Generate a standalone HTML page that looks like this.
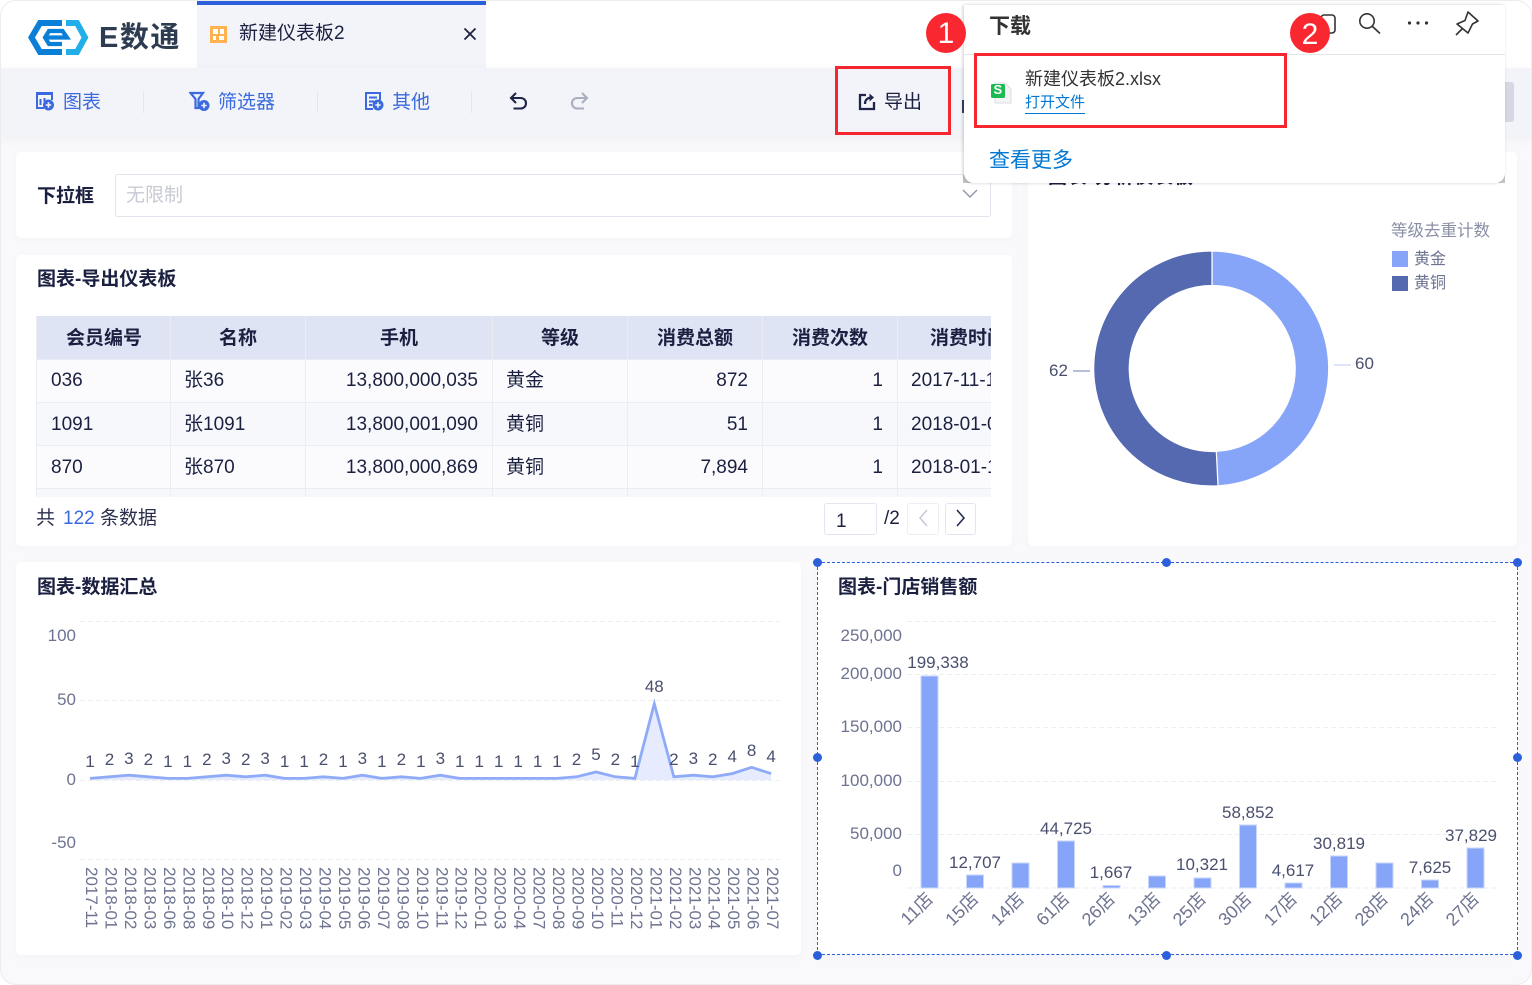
<!DOCTYPE html>
<html lang="zh">
<head>
<meta charset="utf-8">
<title>新建仪表板2</title>
<style>
html,body{margin:0;padding:0;width:1532px;height:985px;background:#fff;overflow:hidden}
body,svg text{font-family:"Liberation Sans","Noto Sans CJK SC",sans-serif}
#app{position:absolute;left:0;top:0;width:1530px;height:983px;border:1px solid #ececef;border-radius:16px;background:#f9f9fb;overflow:hidden}
.abs{position:absolute;box-sizing:border-box}
.t{position:absolute;white-space:nowrap;line-height:26px;height:26px;font-size:19px;color:#1b2040}
.b{font-weight:700}
.card{position:absolute;background:#fff;border-radius:5px;box-shadow:0 2px 10px rgba(40,50,90,.025)}
.blue{color:#3b6ae0}
.h{position:absolute;width:9px;height:9px;border-radius:50%;background:#2b5fdb}
</style>
</head>
<body>
<div id="app">
<div style="position:absolute;left:-1px;top:-1px;width:1532px;height:985px">

<!-- top bar -->
<div class="abs" style="left:0;top:0;width:1532px;height:68px;background:#fff"></div>
<svg class="abs" style="left:24px;top:16px" width="70" height="44" viewBox="24 16 70 44">
  <path d="M62 23H40L31.5 37.5L40 52H62" fill="none" stroke="#0a7fd8" stroke-width="6"/>
  <path d="M45 37.5H67L62.5 31H49L45 37.5L49 44H62" fill="none" stroke="#0a7fd8" stroke-width="4.2"/>
  <path d="M66 23H77L85 37.5L77 52H66" fill="none" stroke="#22aee8" stroke-width="6"/>
</svg>
<div class="t b" style="left:99px;top:19px;height:36px;line-height:38px;font-size:29px;color:#2d3c50;letter-spacing:1.5px">E数通</div>

<div class="abs" style="left:197px;top:1px;width:289px;height:67px;background:#f2f4f9;border-top:4px solid #2b5fdb"></div>
<svg class="abs" style="left:210px;top:26px" width="17" height="17"><rect width="17" height="17" fill="#ffb24f"/><path d="M3 3H8V8H3ZM10 3H14V8H10ZM3 10H6V14H3ZM9 10H14V14H9Z" fill="#fff"/></svg>
<div class="t" style="left:239px;top:21px">新建仪表板2</div>
<svg class="abs" style="left:462px;top:26px" width="16" height="16"><path d="M2.5 2.5L13.5 13.5M13.5 2.5L2.5 13.5" stroke="#1b2040" stroke-width="1.8"/></svg>

<!-- toolbar -->
<div class="abs" style="left:0;top:68px;width:1532px;height:68px;background:#f2f4f9;box-shadow:0 3px 10px rgba(40,50,90,.05)"></div>
<svg class="abs" style="left:35px;top:91px" width="20" height="20" fill="none" stroke="#3b6ae0" stroke-width="2">
  <path d="M9 17H2V3H17V9" stroke-width="2"/><path d="M1 2.5H18" stroke-width="3"/>
  <path d="M5.5 8V14M9.5 7V11"/><circle cx="13.5" cy="14" r="5.5" fill="#3b6ae0" stroke="none"/><path d="M10.8 14H16.2M13.5 11.3V16.7" stroke="#f2f4f9" stroke-width="1.6"/>
</svg>
<div class="t blue" style="left:63px;top:90px">图表</div>
<div class="abs" style="left:143px;top:91px;width:1px;height:22px;background:#e4e6ee"></div>
<svg class="abs" style="left:189px;top:91px" width="21" height="21" fill="none" stroke="#3b6ae0" stroke-width="2.2">
  <path d="M1.5 2H14L9.5 8V17H6.5V8Z"/><circle cx="15" cy="14.5" r="5.5" fill="#3b6ae0" stroke="none"/><path d="M12.3 14.5H17.7M15 11.8V17.2" stroke="#f2f4f9" stroke-width="1.6"/>
</svg>
<div class="t blue" style="left:218px;top:90px">筛选器</div>
<div class="abs" style="left:317px;top:91px;width:1px;height:22px;background:#e4e6ee"></div>
<svg class="abs" style="left:364px;top:91px" width="20" height="20" fill="none" stroke="#3b6ae0" stroke-width="2">
  <path d="M9 18H2V2H16V9"/><path d="M5 6.5H13M5 10.5H10M5 14H8"/><circle cx="14" cy="14" r="5.5" fill="#3b6ae0" stroke="none"/><path d="M11.3 14H16.7M14 11.3V16.7" stroke="#f2f4f9" stroke-width="1.6"/>
</svg>
<div class="t blue" style="left:392px;top:90px">其他</div>
<div class="abs" style="left:471px;top:91px;width:1px;height:22px;background:#e4e6ee"></div>
<svg class="abs" style="left:509px;top:91px" width="19" height="20" fill="none" stroke="#1f2548" stroke-width="2.1">
  <path d="M7 2L2 7L7 12"/><path d="M2 7H11.5C14.8 7 17 9.3 17 12.2C17 15.2 14.8 17.5 11.5 17.5H4.5"/>
</svg>
<svg class="abs" style="left:570px;top:91px" width="19" height="20" fill="none" stroke="#a9aebf" stroke-width="2.1">
  <path d="M12 2L17 7L12 12"/><path d="M17 7H7.5C4.2 7 2 9.3 2 12.2C2 15.2 4.2 17.5 7.5 17.5H14"/>
</svg>
<svg class="abs" style="left:858px;top:92px" width="19" height="19" fill="none" stroke="#1f2548" stroke-width="2.3">
  <path d="M8 3H2V17H16V10"/><path d="M7 12C7 8 9.5 5.5 14 5.5"/><path d="M11.5 1.5L16 5.5L11.5 9.5" fill="#1f2548" stroke="none"/>
</svg>
<div class="t" style="left:884px;top:90px">导出</div>
<div class="abs" style="left:962px;top:100px;width:2px;height:13px;background:#3a3f58"></div>
<div class="abs" style="left:1505px;top:82px;width:9px;height:40px;background:#d5d8e2;border-radius:0 3px 3px 0"></div>

<!-- dropdown card -->
<div class="card" style="left:16px;top:152px;width:996px;height:86px"></div>
<div class="t b" style="left:37px;top:184px">下拉框</div>
<div class="abs" style="left:115px;top:174px;width:876px;height:43px;background:#fff;border:1px solid #e2e3ec;border-radius:3px"></div>
<div class="t" style="left:126px;top:183px;color:#c8cad3">无限制</div>
<svg class="abs" style="left:961px;top:188px" width="18" height="12" fill="none" stroke="#8f94a8" stroke-width="1.4"><path d="M2 2L9 9L16 2"/></svg>

<!-- table card -->
<div class="card" style="left:16px;top:255px;width:996px;height:291px"></div>
<div class="t b" style="left:37px;top:267px">图表-导出仪表板</div>
<div class="abs" style="left:36px;top:316px;width:955px;height:181px;overflow:hidden;background:#fbfbfe">
  <div class="abs" style="left:0;top:0;width:955px;height:43px;background:#dfe4f5"></div>
  <div class="abs" style="left:0;top:86px;width:955px;height:43px;background:#f7f8fc"></div>
  <div class="abs" style="left:0;top:173px;width:955px;height:8px;background:#f7f8fc"></div>
  <div class="abs" style="left:0;top:43px;width:955px;height:1px;background:#e9ebf4"></div>
  <div class="abs" style="left:0;top:86px;width:955px;height:1px;background:#ecedf4"></div>
  <div class="abs" style="left:0;top:129px;width:955px;height:1px;background:#ecedf4"></div>
  <div class="abs" style="left:0;top:172px;width:955px;height:1px;background:#ecedf4"></div>
  <div class="abs" style="left:0;top:0;width:1px;height:181px;background:#ecedf4"></div>
  <div class="abs" style="left:134px;top:0;width:1px;height:181px;background:#ecedf4"></div>
  <div class="abs" style="left:269px;top:0;width:1px;height:181px;background:#ecedf4"></div>
  <div class="abs" style="left:456px;top:0;width:1px;height:181px;background:#ecedf4"></div>
  <div class="abs" style="left:591px;top:0;width:1px;height:181px;background:#ecedf4"></div>
  <div class="abs" style="left:726px;top:0;width:1px;height:181px;background:#ecedf4"></div>
  <div class="abs" style="left:861px;top:0;width:1px;height:181px;background:#ecedf4"></div>

  <div class="t b" style="left:30px;top:10px">会员编号</div>
  <div class="t b" style="left:183px;top:10px">名称</div>
  <div class="t b" style="left:344px;top:10px">手机</div>
  <div class="t b" style="left:505px;top:10px">等级</div>
  <div class="t b" style="left:621px;top:10px">消费总额</div>
  <div class="t b" style="left:756px;top:10px">消费次数</div>
  <div class="t b" style="left:894px;top:10px">消费时间</div>

  <div class="t" style="left:15px;top:52px">036</div>
  <div class="t" style="left:148px;top:52px">张36</div>
  <div class="t" style="right:513px;top:52px">13,800,000,035</div>
  <div class="t" style="left:470px;top:52px">黄金</div>
  <div class="t" style="right:243px;top:52px">872</div>
  <div class="t" style="right:108px;top:52px">1</div>
  <div class="t" style="left:875px;top:52px">2017-11-15</div>

  <div class="t" style="left:15px;top:96px">1091</div>
  <div class="t" style="left:148px;top:96px">张1091</div>
  <div class="t" style="right:513px;top:96px">13,800,001,090</div>
  <div class="t" style="left:470px;top:96px">黄铜</div>
  <div class="t" style="right:243px;top:96px">51</div>
  <div class="t" style="right:108px;top:96px">1</div>
  <div class="t" style="left:875px;top:96px">2018-01-01</div>

  <div class="t" style="left:15px;top:139px">870</div>
  <div class="t" style="left:148px;top:139px">张870</div>
  <div class="t" style="right:513px;top:139px">13,800,000,869</div>
  <div class="t" style="left:470px;top:139px">黄铜</div>
  <div class="t" style="right:243px;top:139px">7,894</div>
  <div class="t" style="right:108px;top:139px">1</div>
  <div class="t" style="left:875px;top:139px">2018-01-11</div>
</div>
<div class="t" style="left:36px;top:506px;color:#2a2f4c">共</div>
<div class="t blue" style="left:63px;top:506px">122</div>
<div class="t" style="left:100px;top:506px;color:#2a2f4c">条数据</div>
<div class="abs" style="left:824px;top:503px;width:53px;height:32px;border:1px solid #e4e5ee;border-radius:3px;background:#fff"></div>
<div class="t" style="left:836px;top:509px">1</div>
<div class="t" style="left:884px;top:506px">/2</div>
<div class="abs" style="left:907px;top:503px;width:32px;height:32px;border:1px solid #eceef4;border-radius:3px;background:#fff"></div>
<svg class="abs" style="left:917px;top:508px" width="12" height="20" fill="none" stroke="#c5c8d6" stroke-width="1.5"><path d="M10 2L3 10L10 18"/></svg>
<div class="abs" style="left:945px;top:503px;width:31px;height:32px;border:1px solid #e4e5ee;border-radius:3px;background:#fff"></div>
<svg class="abs" style="left:955px;top:508px" width="12" height="20" fill="none" stroke="#1f2548" stroke-width="1.5"><path d="M2 2L9 10L2 18"/></svg>

<!-- pie card -->
<div class="card" style="left:1028px;top:152px;width:489px;height:394px"></div>
<div class="t b" style="left:1048px;top:165px;letter-spacing:.8px">图表-分析仪表板</div>

<!-- line card + bar card -->
<div class="card" style="left:16px;top:562px;width:785px;height:393px"></div>
<div class="t b" style="left:37px;top:575px">图表-数据汇总</div>
<div class="card" style="left:817px;top:562px;width:700px;height:393px"></div>
<div class="t b" style="left:838px;top:575px">图表-门店销售额</div>

<!-- charts -->
<svg class="abs" style="left:0;top:0" width="1532" height="985" font-size="17">
  <!-- donut -->
  <path d="M1212 251A117.5 117.5 0 0 1 1218 485.8L1216.3 451.4A83 83 0 0 0 1212 285.5Z" fill="#87a5f8" stroke="#fff" stroke-width="1.2"/>
  <path d="M1218 485.8A117.5 117.5 0 1 1 1212 251L1212 285.5A83 83 0 1 0 1216.3 451.4Z" fill="#5469b0" stroke="#fff" stroke-width="1.2"/>
  <path d="M1334 365H1351" stroke="#c8d4fb" stroke-width="1.2"/>
  <path d="M1073 371H1090" stroke="#8a96c8" stroke-width="1.2"/>
  <text x="1355" y="369" fill="#4a4f6e">60</text>
  <text x="1049" y="376" fill="#4a4f6e">62</text>
  <text x="1391" y="236" font-size="16.5" fill="#8a8fa6">等级去重计数</text>
  <rect x="1392" y="251" width="16" height="16" fill="#87a5f8"/>
  <rect x="1392" y="276" width="16" height="15" fill="#5469b0"/>
  <text x="1414" y="264" font-size="16" fill="#6d7390">黄金</text>
  <text x="1414" y="288" font-size="16" fill="#6d7390">黄铜</text>

  <!-- line chart -->
  <g stroke="#eeeff3" stroke-dasharray="5 3" stroke-width="1">
    <path d="M80 621.5H780M80 700.5H780M80 780.5H780M80 859.5H780"/>
  </g>
  <g fill="#6d7390" text-anchor="end">
    <text x="76" y="641">100</text><text x="76" y="705">50</text><text x="76" y="785">0</text><text x="76" y="848">-50</text>
  </g>
  <polygon fill="#e6ecfd" points="90,780 90,778.4 109.5,776.8 128.9,775.2 148.4,776.8 167.8,778.4 187.3,778.4 206.8,776.8 226.2,775.2 245.7,776.8 265.1,775.2 284.6,778.4 304.1,778.4 323.5,776.8 343,778.4 362.4,775.2 381.9,778.4 401.4,776.8 420.8,778.4 440.3,775.2 459.7,778.4 479.2,778.4 498.7,778.4 518.1,778.4 537.6,778.4 557,778.4 576.5,776.8 596,772 615.4,776.8 634.9,778.4 654.3,703.7 673.8,776.8 693.3,775.2 712.7,776.8 732.2,773.6 751.6,767.3 771.1,773.6 771.1,780"/>
  <polyline fill="none" stroke="#8fabf8" stroke-width="2.8" points="90,778.4 109.5,776.8 128.9,775.2 148.4,776.8 167.8,778.4 187.3,778.4 206.8,776.8 226.2,775.2 245.7,776.8 265.1,775.2 284.6,778.4 304.1,778.4 323.5,776.8 343,778.4 362.4,775.2 381.9,778.4 401.4,776.8 420.8,778.4 440.3,775.2 459.7,778.4 479.2,778.4 498.7,778.4 518.1,778.4 537.6,778.4 557,778.4 576.5,776.8 596,772 615.4,776.8 634.9,778.4 654.3,703.7 673.8,776.8 693.3,775.2 712.7,776.8 732.2,773.6 751.6,767.3 771.1,773.6"/>
  <g fill="#4a4f6e" text-anchor="middle">
    <text x="90" y="767">1</text><text x="109.5" y="765">2</text><text x="128.9" y="764">3</text><text x="148.4" y="765">2</text><text x="167.8" y="767">1</text><text x="187.3" y="767">1</text><text x="206.8" y="765">2</text><text x="226.2" y="764">3</text><text x="245.7" y="765">2</text><text x="265.1" y="764">3</text><text x="284.6" y="767">1</text><text x="304.1" y="767">1</text><text x="323.5" y="765">2</text><text x="343" y="767">1</text><text x="362.4" y="764">3</text><text x="381.9" y="767">1</text><text x="401.4" y="765">2</text><text x="420.8" y="767">1</text><text x="440.3" y="764">3</text><text x="459.7" y="767">1</text><text x="479.2" y="767">1</text><text x="498.7" y="767">1</text><text x="518.1" y="767">1</text><text x="537.6" y="767">1</text><text x="557" y="767">1</text><text x="576.5" y="765">2</text><text x="596" y="760">5</text><text x="615.4" y="765">2</text><text x="634.9" y="767">1</text><text x="654.3" y="692">48</text><text x="673.8" y="765">2</text><text x="693.3" y="764">3</text><text x="712.7" y="765">2</text><text x="732.2" y="762">4</text><text x="751.6" y="756">8</text><text x="771.1" y="762">4</text>
  </g>
  <g fill="#6d7390" transform="translate(1,0)">
    <text transform="translate(85,867) rotate(90)">2017-11</text>
    <text transform="translate(104.5,867) rotate(90)">2018-01</text>
    <text transform="translate(123.9,867) rotate(90)">2018-02</text>
    <text transform="translate(143.4,867) rotate(90)">2018-03</text>
    <text transform="translate(162.8,867) rotate(90)">2018-06</text>
    <text transform="translate(182.3,867) rotate(90)">2018-08</text>
    <text transform="translate(201.8,867) rotate(90)">2018-09</text>
    <text transform="translate(221.2,867) rotate(90)">2018-10</text>
    <text transform="translate(240.7,867) rotate(90)">2018-12</text>
    <text transform="translate(260.1,867) rotate(90)">2019-01</text>
    <text transform="translate(279.6,867) rotate(90)">2019-02</text>
    <text transform="translate(299.1,867) rotate(90)">2019-03</text>
    <text transform="translate(318.5,867) rotate(90)">2019-04</text>
    <text transform="translate(338,867) rotate(90)">2019-05</text>
    <text transform="translate(357.4,867) rotate(90)">2019-06</text>
    <text transform="translate(376.9,867) rotate(90)">2019-07</text>
    <text transform="translate(396.4,867) rotate(90)">2019-08</text>
    <text transform="translate(415.8,867) rotate(90)">2019-10</text>
    <text transform="translate(435.3,867) rotate(90)">2019-11</text>
    <text transform="translate(454.7,867) rotate(90)">2019-12</text>
    <text transform="translate(474.2,867) rotate(90)">2020-01</text>
    <text transform="translate(493.7,867) rotate(90)">2020-03</text>
    <text transform="translate(513.1,867) rotate(90)">2020-04</text>
    <text transform="translate(532.6,867) rotate(90)">2020-07</text>
    <text transform="translate(552,867) rotate(90)">2020-08</text>
    <text transform="translate(571.5,867) rotate(90)">2020-09</text>
    <text transform="translate(591,867) rotate(90)">2020-10</text>
    <text transform="translate(610.4,867) rotate(90)">2020-11</text>
    <text transform="translate(629.9,867) rotate(90)">2020-12</text>
    <text transform="translate(649.3,867) rotate(90)">2021-01</text>
    <text transform="translate(668.8,867) rotate(90)">2021-02</text>
    <text transform="translate(688.3,867) rotate(90)">2021-03</text>
    <text transform="translate(707.7,867) rotate(90)">2021-04</text>
    <text transform="translate(727.2,867) rotate(90)">2021-05</text>
    <text transform="translate(746.6,867) rotate(90)">2021-06</text>
    <text transform="translate(766.1,867) rotate(90)">2021-07</text>
  </g>

  <!-- bar chart -->
  <g stroke="#eeeff3" stroke-dasharray="5 3" stroke-width="1">
    <path d="M907 621.5H1499M907 674.5H1499M907 727.5H1499M907 781.5H1499M907 834.5H1499M907 888H1499"/>
  </g>
  <g fill="#6d7390" text-anchor="end">
    <text x="902" y="641">250,000</text><text x="902" y="679">200,000</text><text x="902" y="732">150,000</text><text x="902" y="786">100,000</text><text x="902" y="839">50,000</text><text x="902" y="876">0</text>
  </g>
  <g fill="#87a5f8" stroke="#c9d6fc" stroke-width="1">
    <rect x="921" y="676" width="17" height="212"/>
    <rect x="966.5" y="875" width="17" height="13"/>
    <rect x="1012" y="863" width="17" height="25"/>
    <rect x="1057.5" y="841" width="17" height="47"/>
    <rect x="1103" y="885.5" width="17" height="2.5"/>
    <rect x="1148.5" y="876" width="17" height="12"/>
    <rect x="1194" y="878" width="17" height="10"/>
    <rect x="1239.5" y="825" width="17" height="63"/>
    <rect x="1285" y="883" width="17" height="5"/>
    <rect x="1330.5" y="856" width="17" height="32"/>
    <rect x="1376" y="863" width="17" height="25"/>
    <rect x="1421.5" y="880" width="17" height="8"/>
    <rect x="1467" y="848" width="17" height="40"/>
  </g>
  <g fill="#4a4f6e" text-anchor="middle">
    <text x="938" y="668">199,338</text>
    <text x="975" y="868">12,707</text>
    <text x="1066" y="834">44,725</text>
    <text x="1111" y="878">1,667</text>
    <text x="1202" y="870">10,321</text>
    <text x="1248" y="818">58,852</text>
    <text x="1293" y="876">4,617</text>
    <text x="1339" y="849">30,819</text>
    <text x="1430" y="873">7,625</text>
    <text x="1471" y="841">37,829</text>
  </g>
  <g fill="#6d7390" text-anchor="end" font-size="18">
    <text transform="translate(934,900) rotate(-45)">11店</text>
    <text transform="translate(979.5,900) rotate(-45)">15店</text>
    <text transform="translate(1025,900) rotate(-45)">14店</text>
    <text transform="translate(1070.5,900) rotate(-45)">61店</text>
    <text transform="translate(1116,900) rotate(-45)">26店</text>
    <text transform="translate(1161.5,900) rotate(-45)">13店</text>
    <text transform="translate(1207,900) rotate(-45)">25店</text>
    <text transform="translate(1252.5,900) rotate(-45)">30店</text>
    <text transform="translate(1298,900) rotate(-45)">17店</text>
    <text transform="translate(1343.5,900) rotate(-45)">12店</text>
    <text transform="translate(1389,900) rotate(-45)">28店</text>
    <text transform="translate(1434.5,900) rotate(-45)">24店</text>
    <text transform="translate(1480,900) rotate(-45)">27店</text>
  </g>
</svg>

<!-- selection -->
<div class="abs" style="left:817px;top:562px;width:701px;height:393px;border:1px dashed #2b5fdb"></div>
<div class="h" style="left:813px;top:558px"></div>
<div class="h" style="left:1162px;top:558px"></div>
<div class="h" style="left:1513px;top:558px"></div>
<div class="h" style="left:813px;top:753px"></div>
<div class="h" style="left:1513px;top:753px"></div>
<div class="h" style="left:813px;top:951px"></div>
<div class="h" style="left:1162px;top:951px"></div>
<div class="h" style="left:1513px;top:951px"></div>

<!-- download popup -->
<div class="abs" style="left:963px;top:175px;width:8px;height:8px;background:#c4c5ca"></div>
<div class="abs" style="left:1498px;top:175px;width:7px;height:8px;background:#c4c5ca"></div>
<div class="abs" style="left:964px;top:5px;width:541px;height:178px;background:#fff;border-radius:0 0 10px 10px;box-shadow:-1px 0 3px rgba(0,0,0,.2)"></div>
<div class="t b" style="left:989px;top:14px;font-size:21px;color:#333">下载</div>
<div class="abs" style="left:964px;top:54px;width:541px;height:1px;background:#e6e6e6"></div>
<svg class="abs" style="left:1316px;top:10px" width="170" height="30" viewBox="1316 10 170 30" fill="none" stroke="#333" stroke-width="1.6">
  <rect x="1321" y="15" width="14" height="18" rx="3"/>
  <circle cx="1367" cy="21" r="7.2"/><path d="M1372.5 26.5L1380 33.5"/>
  <circle cx="1409.5" cy="23" r="1.6" fill="#333" stroke="none"/><circle cx="1418" cy="23" r="1.6" fill="#333" stroke="none"/><circle cx="1426.5" cy="23" r="1.6" fill="#333" stroke="none"/>
  <path d="M1468 12L1478 21L1472.5 24L1468 33L1457 24L1465 20.5Z" stroke-linejoin="round"/><path d="M1462 29L1456 35"/>
</svg>
<div class="abs" style="left:926px;top:13px;width:40px;height:40px;border-radius:50%;background:#f9272f;color:#fff;font-size:30px;line-height:41px;text-align:center">1</div>
<div class="abs" style="left:1290px;top:13px;width:40px;height:40px;border-radius:50%;background:#f9272f;color:#fff;font-size:30px;line-height:43px;text-align:center">2</div>

<svg class="abs" style="left:990px;top:82px" width="23" height="22">
  <path d="M5 1H15L21 7V21H5Z" fill="#f3f4f6" stroke="#dcdde2"/>
  <rect x="1" y="2" width="14" height="14" rx="1.5" fill="#1db954"/>
</svg>
<div class="t b" style="left:993.5px;top:81px;font-size:13px;color:#fff;height:18px;line-height:18px">S</div>
<div class="t" style="left:1025px;top:66px;font-size:18px;color:#333">新建仪表板2.xlsx</div>
<div class="t" style="left:1025px;top:90px;font-size:15px;color:#0078d4">打开文件</div>
<div class="abs" style="left:1025px;top:113px;width:60px;height:1px;background:#0078d4"></div>
<div class="t" style="left:989px;top:148px;font-size:21px;color:#0078d4">查看更多</div>

<!-- red boxes -->
<div class="abs" style="left:835px;top:66px;width:116px;height:69px;border:3px solid #f5262e"></div>
<div class="abs" style="left:974px;top:53px;width:313px;height:75px;border:3px solid #f5262e"></div>

</div>
</div>
</body>
</html>
